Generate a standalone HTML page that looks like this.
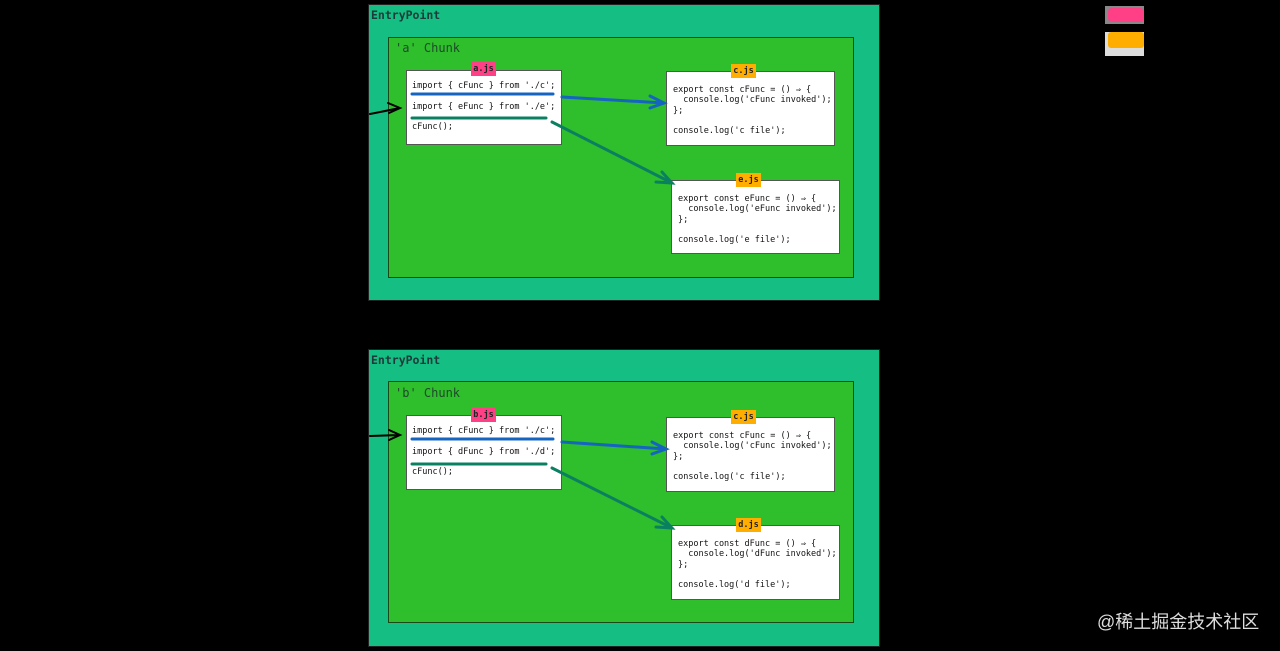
<!DOCTYPE html><html><head><style>
body{margin:0;width:1280px;height:651px;background:#000;position:relative;overflow:hidden;font-family:"DejaVu Sans Mono","Liberation Mono",monospace}
.a{position:absolute}
.ep{background:#15be82;border:1px solid #222;box-sizing:border-box}
.ch{background:#2fbe2c;border:1px solid #1a4a1a;box-sizing:border-box}
.f{background:#fff;border:1px solid #555;box-sizing:border-box;font-size:8.5px;color:#111;line-height:10.3px;white-space:pre}
.t{color:#1e3a3a;font-weight:bold;font-size:11.5px}
.c{color:#1e4a2a;font-size:12px}
.lb{font-size:8.5px;font-weight:bold;color:#222;text-align:center;line-height:14px;height:14px;width:25px}
</style></head><body>
<div class="a" style="left:1105px;top:6px;width:39px;height:18px;background:#888"></div>
<div class="a" style="left:1108px;top:8px;width:36px;height:14px;background:#ff3f86;border-radius:4px"></div>
<div class="a" style="left:1105px;top:32px;width:39px;height:24px;background:#ddd"></div>
<div class="a" style="left:1108px;top:32px;width:36px;height:16px;background:#ffae00;border-radius:3px"></div>

<div class="a ep" style="left:368px;top:4px;width:512px;height:297px"></div>
<div class="a t" style="left:371px;top:8px">EntryPoint</div>
<div class="a ch" style="left:388px;top:37px;width:466px;height:241px"></div>
<div class="a c" style="left:395px;top:41px">'a' Chunk</div>
<div class="a f" style="left:406px;top:70px;width:156px;height:75px;padding:10px 0 0 5px">import { cFunc } from './c';

import { eFunc } from './e';

cFunc();</div>
<div class="a lb" style="left:471px;top:62px;background:#ff3f86">a.js</div>
<div class="a f" style="left:666px;top:71px;width:169px;height:75px;padding:13px 0 0 6px">export const cFunc = () ⇒ {
  console.log('cFunc invoked');
};

console.log('c file');</div>
<div class="a lb" style="left:731px;top:64px;background:#ffae00">c.js</div>
<div class="a f" style="left:671px;top:180px;width:169px;height:74px;padding:13px 0 0 6px">export const eFunc = () ⇒ {
  console.log('eFunc invoked');
};

console.log('e file');</div>
<div class="a lb" style="left:736px;top:173px;background:#ffae00">e.js</div>

<div class="a ep" style="left:368px;top:349px;width:512px;height:298px"></div>
<div class="a t" style="left:371px;top:353px">EntryPoint</div>
<div class="a ch" style="left:388px;top:381px;width:466px;height:242px"></div>
<div class="a c" style="left:395px;top:386px">'b' Chunk</div>
<div class="a f" style="left:406px;top:415px;width:156px;height:75px;padding:10px 0 0 5px">import { cFunc } from './c';

import { dFunc } from './d';

cFunc();</div>
<div class="a lb" style="left:471px;top:408px;background:#ff3f86">b.js</div>
<div class="a f" style="left:666px;top:417px;width:169px;height:75px;padding:13px 0 0 6px">export const cFunc = () ⇒ {
  console.log('cFunc invoked');
};

console.log('c file');</div>
<div class="a lb" style="left:731px;top:410px;background:#ffae00">c.js</div>
<div class="a f" style="left:671px;top:525px;width:169px;height:75px;padding:13px 0 0 6px">export const dFunc = () ⇒ {
  console.log('dFunc invoked');
};

console.log('d file');</div>
<div class="a lb" style="left:736px;top:518px;background:#ffae00">d.js</div>

<svg class="a" style="left:0;top:0" width="1280" height="651">
<g fill="none" stroke-width="3" stroke-linecap="round">
<path d="M412 94 L553 94" stroke="#1565c0"/>
<path d="M412 118 L546 118" stroke="#0b8060"/>
<path d="M562 97 L664 103 M650 96 L664 103 L650 108" stroke="#1565c0"/>
<path d="M552 122 L672 183 M656 182 L672 183 L662 172" stroke="#0b8060"/>
<path d="M370 114 L400 108 M388 103 L400 108 L389 113" stroke="#000" stroke-width="2"/>
<path d="M412 439 L553 439" stroke="#1565c0"/>
<path d="M412 464 L546 464" stroke="#0b8060"/>
<path d="M562 442 L666 449 M652 442 L666 449 L652 454" stroke="#1565c0"/>
<path d="M552 468 L672 528 M656 527 L672 528 L662 517" stroke="#0b8060"/>
<path d="M370 436 L400 435 M389 430 L400 435 L389 440" stroke="#000" stroke-width="2"/>
</g></svg>
<div class="a" style="left:1097px;top:608px;font-family:'Liberation Sans','Noto Sans CJK SC',sans-serif;font-size:18px;color:#ddd">@稀土掘金技术社区</div>
</body></html>
